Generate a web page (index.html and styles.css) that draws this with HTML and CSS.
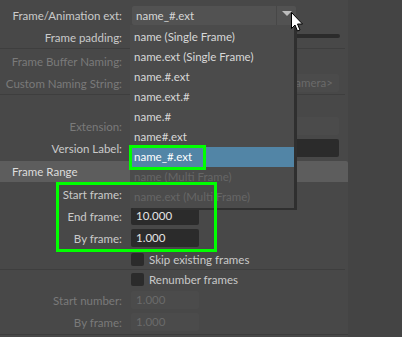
FILE: index.html
```html
<!DOCTYPE html>
<html>
<head>
<meta charset="utf-8">
<link rel="stylesheet" href="styles.css">
</head>
<body>
<div class="panel">
  <div class="row">
    <div class="label">Frame/Animation ext:</div>
    <div class="combo">
      <span class="combo-text">name_#.ext</span>
      <span class="combo-btn"><span class="tri"></span></span>
    </div>
  </div>
  <div class="row">
    <div class="label">Frame padding:</div>
    <div class="slider-wrap"><div class="slider"></div></div>
  </div>
  <div class="sep"></div>
  <div class="row">
    <div class="label dim">Frame Buffer Naming:</div>
  </div>
  <div class="row">
    <div class="label dim">Custom Naming String:</div>
    <div class="field wide disabled right"><span>&lt;RenderPass&gt;.&lt;Camera&gt;</span></div>
  </div>
  <div class="sep"></div>
  <div class="spacer"></div>
  <div class="row">
    <div class="label dim">Extension:</div>
    <div class="field wide disabled"></div>
  </div>
  <div class="row">
    <div class="label">Version Label:</div>
    <div class="field wide"></div>
  </div>
  <div class="header">Frame Range</div>
  <div class="row">
    <div class="label">Start frame:</div>
    <div class="field num"></div>
  </div>
  <div class="row">
    <div class="label">End frame:</div>
    <div class="field num">10.000</div>
  </div>
  <div class="row">
    <div class="label">By frame:</div>
    <div class="field num">1.000</div>
  </div>
  <div class="row check-row">
    <div class="label"></div>
    <div class="check"></div>
    <span class="check-label">Skip existing frames</span>
  </div>
  <div class="sep thin"></div>
  <div class="row check-row second">
    <div class="label"></div>
    <div class="check"></div>
    <span class="check-label">Renumber frames</span>
  </div>
  <div class="row">
    <div class="label dim">Start number:</div>
    <div class="field num disabled">1.000</div>
  </div>
  <div class="row">
    <div class="label dim">By frame:</div>
    <div class="field num disabled">1.000</div>
  </div>
  <div class="bottom-line"></div>
</div>

<div class="menu">
  <div class="item">name (Single Frame)</div>
  <div class="item">name.ext (Single Frame)</div>
  <div class="item">name.#.ext</div>
  <div class="item">name.ext.#</div>
  <div class="item">name.#</div>
  <div class="item">name#.ext</div>
  <div class="item selected">name_#.ext</div>
  <div class="item off">name (Multi Frame)</div>
  <div class="item off">name.ext (Multi Frame)</div>
</div>

<div class="mark mark-item"></div>
<div class="mark mark-range"></div>

<svg class="cursor" width="14" height="22" viewBox="0 0 14 22">
  <path d="M1.5 1.5 L1.5 17.5 L5 14 L7.5 20 L10 19 L7.5 13 L12.5 13 Z" fill="#fff" stroke="#000" stroke-width="1" stroke-linejoin="miter"/>
</svg>
</body>
</html>
```

FILE: styles.css
```css
html, body {
  margin: 0;
  padding: 0;
}
body {
  background: #444444;
  width: 402px;
  height: 337px;
  overflow: hidden;
  position: relative;
  font-family: Lato, "Open Sans", "DejaVu Sans", sans-serif;
  font-size: 11.5px;
  color: #c8c8c8;
}
.panel {
  width: 348px;
  height: 337px;
  background: #484848;
  padding-top: 4px;
  box-sizing: border-box;
  display: flex;
  flex-direction: column;
}
.row {
  height: 22px;
  display: flex;
  align-items: center;
  flex: none;
}
.label {
  width: 122px;
  margin-right: 9px;
  text-align: right;
  white-space: nowrap;
  flex: none;
  color: #cacaca;
}
.label.dim {
  color: #7a7a7a;
}
.sep {
  height: 2px;
  flex: none;
  border-top: 1px solid #3e3e3e;
  box-sizing: border-box;
  margin-right: 3px;
}
.sep.thin {
  height: 1px;
}
.spacer {
  height: 19px;
  flex: none;
}
.combo {
  width: 164px;
  height: 19px;
  margin-left: 1px;
  background: #525252;
  border-radius: 2px;
  display: flex;
  align-items: center;
  box-sizing: border-box;
}
.combo-text {
  flex: 1;
  padding-left: 4px;
  color: #d6d6d6;
}
.combo-btn {
  width: 19px;
  height: 19px;
  border-left: 1px solid #474747;
  display: flex;
  align-items: center;
  justify-content: center;
}
.tri {
  width: 0;
  height: 0;
  border-left: 5px solid transparent;
  border-right: 5px solid transparent;
  border-top: 5px solid #bdbdbd;
  margin-top: -3px;
}
.slider-wrap {
  flex: none;
  width: 209px;
  height: 22px;
  display: flex;
  align-items: center;
  justify-content: flex-end;
}
.slider {
  width: 120px;
  height: 4px;
  background: #2b2b2b;
  border-radius: 2px;
  margin-top: -3px;
}
.field {
  height: 18px;
  line-height: 18px;
  background: #2b2b2b;
  border-radius: 2px;
  box-sizing: border-box;
  padding-left: 5px;
  color: #e4e4e4;
  white-space: nowrap;
  overflow: hidden;
  flex: none;
}
.field.wide {
  width: 208px;
}
.field.num {
  width: 68px;
}
.field.disabled {
  background: #4b4b4b;
  color: #6a6a6a;
}
.field.right {
  display: flex;
  justify-content: flex-end;
  padding-right: 6px;
}
.header {
  margin-top: 2px;
  height: 21px;
  line-height: 21px;
  background: #5d5d5d;
  color: #dcdcdc;
  padding-left: 12px;
  flex: none;
  border-top-right-radius: 2px;
}
.header + .row {
  margin-top: 1px;
}
.check-row {
  height: 20px;
}
.check-row.second {
  height: 19px;
}
.check {
  width: 13px;
  height: 13px;
  background: #2b2b2b;
  border-radius: 2px;
  flex: none;
}
.check-label {
  margin-left: 5px;
  color: #c8c8c8;
}
.bottom-line {
  height: 1px;
  background: #3c3c3c;
  margin-top: 1px;
  flex: none;
}
.menu {
  position: absolute;
  left: 130px;
  top: 25px;
  width: 164px;
  height: 183px;
  background: #4b4b4b;
  box-sizing: border-box;
  padding-top: 2px;
  box-shadow: 3px 2px 0 #2f2f2f;
}
.item {
  height: 20px;
  line-height: 20px;
  padding-left: 4px;
  color: #d8d8d8;
  white-space: nowrap;
}
.item.selected {
  background: #5285a6;
  color: #ffffff;
}
.item.off {
  color: #666666;
}
.mark {
  position: absolute;
  border: 3px solid #00ff00;
  box-sizing: border-box;
}
.mark-item {
  left: 129px;
  top: 145px;
  width: 77px;
  height: 25px;
}
.mark-range {
  left: 56px;
  top: 182px;
  width: 161px;
  height: 70px;
}
.cursor {
  position: absolute;
  left: 290px;
  top: 11px;
}
```
